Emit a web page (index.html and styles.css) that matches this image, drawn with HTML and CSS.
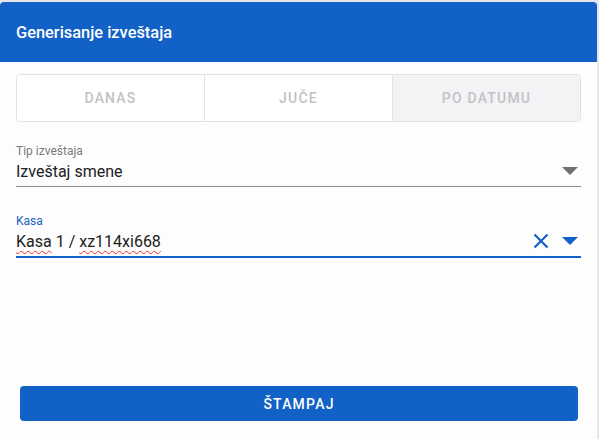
FILE: index.html
```html
<!DOCTYPE html>
<html lang="sr">
<head>
    <meta charset="UTF-8">
    <title>Generisanje izveštaja</title>
    <link rel="stylesheet" href="styles.css">
</head>
<body>
    <div class="dialog">
        <div class="dialog-header">Generisanje izveštaja</div>
        <div class="dialog-body">
            <div class="tabs">
                <div class="tab">Danas</div>
                <div class="tab">Juče</div>
                <div class="tab active">Po datumu</div>
            </div>

            <div class="field">
                <label class="field-label">Tip izveštaja</label>
                <div class="field-input">
                    <span class="field-value">Izveštaj smene</span>
                    <svg class="arrow" width="16" height="8" viewBox="0 0 16 8"><path d="M0 0h16L8 8z"/></svg>
                </div>
            </div>

            <div class="field focused">
                <label class="field-label">Kasa</label>
                <div class="field-input">
                    <span class="field-value"><span class="typo">Kasa</span> 1 / <span class="typo">xz114xi668</span></span>
                    <svg class="clear" width="16" height="16" viewBox="0 0 16 16"><path d="M1.5 1.5l13 13M14.5 1.5l-13 13"/></svg>
                    <svg class="arrow" width="16" height="8" viewBox="0 0 16 8"><path d="M0 0h16L8 8z"/></svg>
                </div>
            </div>
        </div>
        <div class="dialog-footer">
            <button class="print-button">Štampaj</button>
        </div>
    </div>
</body>
</html>
```

FILE: styles.css
```css
html, body {
    height: 100%;
}
body {
    margin: 0;
    padding: 2px 2px 0 0;
    box-sizing: border-box;
    background: #e7e6ee;
    font-family: Roboto, "Noto Sans", Arial, sans-serif;
    color: #212121;
}
.dialog {
    height: 100%;
    background: #fdfdfe;
    border-radius: 4px 4px 0 0;
    display: flex;
    flex-direction: column;
}
.dialog-header {
    background: #1161c6;
    color: white;
    height: 60px;
    border-radius: 4px 4px 0 0;
    padding: 0 16px;
    display: flex;
    align-items: center;
    font-size: 16.4px;
    font-weight: 500;
}
.dialog-body {
    flex: 1;
    padding: 12px 16px 0 16px;
}
.tabs {
    display: flex;
    border: 1px solid #e2e2e4;
    border-radius: 4px;
    overflow: hidden;
    height: 46px;
}
.tab {
    flex: 1;
    display: flex;
    align-items: center;
    justify-content: center;
    text-transform: uppercase;
    font-size: 14px;
    font-weight: 500;
    letter-spacing: 1.2px;
    color: #c3c2c6;
    background: white;
}
.tab + .tab {
    border-left: 1px solid #e2e2e4;
}
.tab.active {
    background: #f3f2f5;
}
.field {
    margin-top: 22px;
}
.field + .field {
    margin-top: 27px;
}
.field-label {
    display: block;
    font-size: 12px;
    color: #7a7a7a;
    line-height: 14px;
}
.field-input {
    display: flex;
    align-items: center;
    height: 26px;
    padding: 0 3px 2px 0;
    border-bottom: 1px solid #8a8a8a;
    gap: 12px;
}
.field-value {
    flex: 1;
    font-size: 16px;
}
.arrow {
    fill: #707070;
}
.focused .field-label {
    color: #1a62c6;
}
.focused .field-input {
    border-bottom: 2px solid #1161c6;
}
.focused .arrow {
    fill: #1161c6;
}
.clear {
    stroke: #1161c6;
    stroke-width: 2.2;
    margin-right: 1px;
}
.typo {
    text-decoration: underline wavy #f0302a;
    text-decoration-thickness: 1px;
    text-underline-offset: 3px;
}
.dialog-footer {
    padding: 0 19px 18px 20px;
}
.print-button {
    width: 100%;
    height: 35px;
    border: none;
    border-radius: 4px;
    background: #1161c6;
    color: white;
    font-family: inherit;
    font-size: 14px;
    font-weight: 500;
    letter-spacing: 1.2px;
    text-transform: uppercase;
}
```
